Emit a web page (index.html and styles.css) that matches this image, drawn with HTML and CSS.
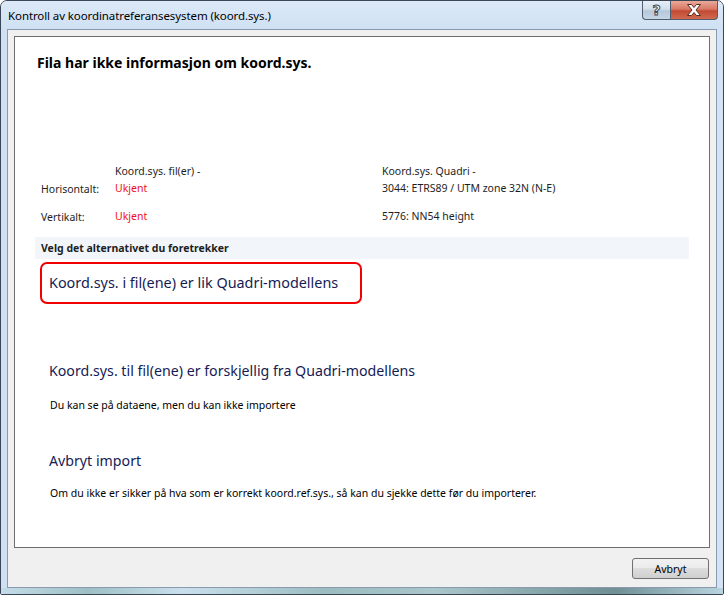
FILE: index.html
```html
<!DOCTYPE html>
<html>
<head>
<meta charset="utf-8">
<link rel="stylesheet" href="styles.css">
</head>
<body>
<div class="window">
  <div class="titlebar">
    <div class="title">Kontroll av koordinatreferansesystem (koord.sys.)</div>
    <div class="caption-buttons">
      <div class="cap-btn help"><span class="help-glyph">?</span></div>
      <div class="cap-btn close">
        <svg width="16" height="12" viewBox="0 0 16 12"><path d="M1.5 0.5 H5.5 L8 3.5 L10.5 0.5 H14.5 L10 6 L14.5 11.5 H10.5 L8 8.5 L5.5 11.5 H1.5 L6 6 Z" fill="#ffffff" stroke="#5a2a22" stroke-width="1" stroke-linejoin="round"/></svg>
      </div>
    </div>
  </div>
  <div class="client">
    <div class="panel">
      <h1 class="heading">Fila har ikke informasjon om koord.sys.</h1>
      <div class="info">
        <div class="row head">
          <div class="lbl"></div>
          <div class="c2">Koord.sys. fil(er) -</div>
          <div class="c3">Koord.sys. Quadri -</div>
        </div>
        <div class="row">
          <div class="lbl">Horisontalt:</div>
          <div class="c2 unknown">Ukjent</div>
          <div class="c3">3044: ETRS89 / UTM zone 32N (N-E)</div>
        </div>
        <div class="row second">
          <div class="lbl">Vertikalt:</div>
          <div class="c2 unknown">Ukjent</div>
          <div class="c3">5776: NN54 height</div>
        </div>
      </div>
      <div class="band">Velg det alternativet du foretrekker</div>
      <div class="cmd selected">Koord.sys. i fil(ene) er lik Quadri-modellens</div>
      <div class="cmd-block opt2">
        <div class="cmd-title">Koord.sys. til fil(ene) er forskjellig fra Quadri-modellens</div>
        <div class="cmd-desc">Du kan se på dataene, men du kan ikke importere</div>
      </div>
      <div class="cmd-block opt3">
        <div class="cmd-title">Avbryt import</div>
        <div class="cmd-desc">Om du ikke er sikker på hva som er korrekt koord.ref.sys., så kan du sjekke dette før du importerer.</div>
      </div>
    </div>
    <div class="footer">
      <button class="btn">Avbryt</button>
    </div>
  </div>
</div>
</body>
</html>
```
FILE: styles.css
```css
html, body {
  margin: 0;
  padding: 0;
  width: 724px;
  height: 595px;
  overflow: hidden;
  background: #ffffff;
}
body {
  font-family: "Noto Sans", "DejaVu Sans", sans-serif;
  color: #1e1e1e;
}
.window {
  box-sizing: border-box;
  width: 724px;
  height: 595px;
  border: 1px solid #3a4656;
  border-radius: 7px 7px 2px 2px;
  background:
    linear-gradient(90deg, #cfe0f3 0%, #d9e7f6 30%, #c6dbf0 60%, #d3e3f5 100%);
  display: flex;
  flex-direction: column;
  padding: 0 6px 6px 6px;
  position: relative;
  overflow: hidden;
}
.window::after {
  content: "";
  position: absolute;
  left: 0;
  right: 0;
  bottom: 0;
  height: 6px;
  background: linear-gradient(90deg, #c5dce8 0%, #9dbfc4 12%, #c9e0ec 25%, #9bbcc0 45%, #a9c6ca 60%, #6f8f94 85%, #b9d4df 100%);
}
.titlebar {
  height: 28px;
  display: flex;
  align-items: flex-start;
  justify-content: space-between;
  background: linear-gradient(180deg, #dce9f7 0%, #cfe1f4 100%);
  margin: 0 -6px;
  padding: 0 6px 0 7px;
}
.title {
  font-size: 11.5px;
  line-height: 29px;
  color: #000000;
  letter-spacing: -0.1px;
}
.caption-buttons {
  display: flex;
  margin-right: -1px;
}
.cap-btn {
  height: 19px;
  box-sizing: border-box;
  border: 1px solid #4f5d6e;
  border-top: none;
  display: flex;
  align-items: center;
  justify-content: center;
}
.help {
  width: 28px;
  border-radius: 0 0 0 4px;
  border-right: none;
  background: linear-gradient(180deg, #e6eef7 0%, #d2dfec 45%, #b7c8da 55%, #c6d5e5 100%);
}
.help-glyph {
  font-family: "DejaVu Sans", sans-serif;
  font-weight: bold;
  font-size: 14px;
  line-height: 17px;
  color: #ffffff;
  -webkit-text-stroke: 1px #3b4a5c;
}
.close {
  width: 48px;
  border-radius: 0 0 4px 0;
  background: linear-gradient(180deg, #e9a99a 0%, #d87a66 45%, #c24a33 55%, #d06a50 100%);
}
.close svg { display: block; }
.client {
  flex: 1;
  display: flex;
  flex-direction: column;
  background: #f0f0f0;
  border: 1px solid #8a9bb0;
  padding: 6px 6px 0 6px;
}
.panel {
  height: 512px;
  box-sizing: border-box;
  background: #ffffff;
  border: 1px solid #6e6e6e;
  padding: 0 20px 0 20px;
}
.heading {
  margin: 16px 0 0 2px;
  font-size: 14px;
  line-height: 20px;
  font-weight: bold;
  color: #000000;
}
.info {
  margin-top: 90px;
  font-size: 10.5px;
}
.row {
  display: flex;
  height: 17px;
  line-height: 17px;
}
.row.second { margin-top: 11px; }
.lbl {
  width: 80px;
  padding-left: 6px;
  box-sizing: border-box;
  padding-top: 1px;
}
.c2 { width: 267px; }
.c3 { flex: 1; }
.unknown { color: #ee1122; }
.band {
  margin-top: 12px;
  height: 22px;
  line-height: 22px;
  background: #f2f6fb;
  padding-left: 6px;
  font-size: 10.5px;
  font-weight: bold;
  color: #1e1e1e;
}
.cmd {
  margin: 3px 0 0 5px;
  width: 322px;
  height: 42px;
  box-sizing: border-box;
  border: 2px solid #f00000;
  border-radius: 7px;
  padding-left: 7px;
  font-size: 14.4px;
  line-height: 38px;
  color: #151c55;
}
.cmd-block { padding-left: 14px; }
.opt2 { margin-top: 57px; }
.opt3 { margin-top: 38px; }
.cmd-title {
  font-size: 14.2px;
  line-height: 20px;
  color: #151c55;
}
.cmd-desc {
  margin-top: 17px;
  padding-left: 1px;
  font-size: 10.5px;
  line-height: 15px;
  color: #000000;
}
.opt3 .cmd-desc { margin-top: 15px; }
.footer {
  flex: 1;
  display: flex;
  justify-content: flex-end;
  align-items: flex-start;
  padding-top: 10px;
}
.btn {
  width: 77px;
  height: 21px;
  border: 1px solid #707070;
  border-radius: 3px;
  background: linear-gradient(180deg, #f2f2f2 0%, #ebebeb 45%, #dddddd 50%, #cfcfcf 100%);
  font-family: "Noto Sans", "DejaVu Sans", sans-serif;
  font-size: 10.5px;
  color: #000000;
  padding: 0;
  margin-right: 1px;
}
```
